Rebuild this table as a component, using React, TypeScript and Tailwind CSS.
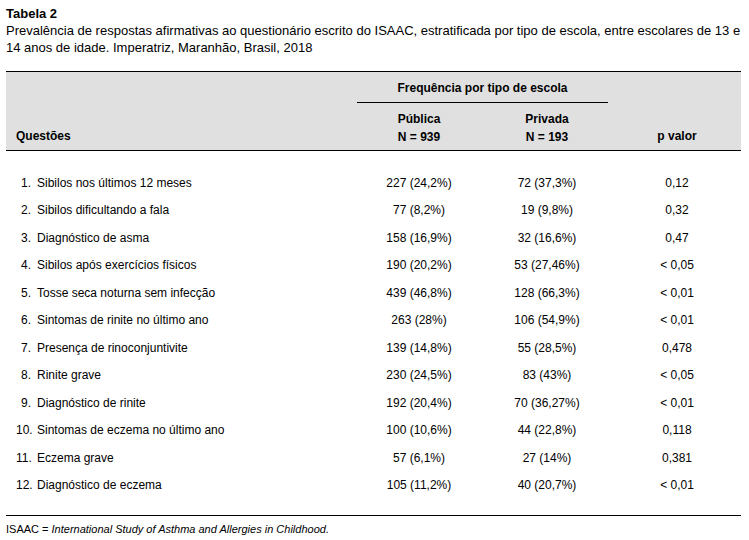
import React from "react";

const rows: [string, string, string, string][] = [
  ["Sibilos nos últimos 12 meses", "227 (24,2%)", "72 (37,3%)", "0,12"],
  ["Sibilos dificultando a fala", "77 (8,2%)", "19 (9,8%)", "0,32"],
  ["Diagnóstico de asma", "158 (16,9%)", "32 (16,6%)", "0,47"],
  ["Sibilos após exercícios físicos", "190 (20,2%)", "53 (27,46%)", "< 0,05"],
  ["Tosse seca noturna sem infecção", "439 (46,8%)", "128 (66,3%)", "< 0,01"],
  ["Sintomas de rinite no último ano", "263 (28%)", "106 (54,9%)", "< 0,01"],
  ["Presença de rinoconjuntivite", "139 (14,8%)", "55 (28,5%)", "0,478"],
  ["Rinite grave", "230 (24,5%)", "83 (43%)", "< 0,05"],
  ["Diagnóstico de rinite", "192 (20,4%)", "70 (36,27%)", "< 0,01"],
  ["Sintomas de eczema no último ano", "100 (10,6%)", "44 (22,8%)", "0,118"],
  ["Eczema grave", "57 (6,1%)", "27 (14%)", "0,381"],
  ["Diagnóstico de eczema", "105 (11,2%)", "40 (20,7%)", "< 0,01"],
];

export default function App() {
  return (
    <div
      className="w-[749px] h-[540px] bg-white text-black px-[6px] pt-[5px]"
      style={{ fontFamily: '"Liberation Sans", Arial, sans-serif' }}
    >
      <div className="text-[13px] leading-[17px] font-bold">Tabela 2</div>
      <div className="text-[13px] leading-[17px] whitespace-nowrap">
        Prevalência de respostas afirmativas ao questionário escrito do ISAAC, estratificada por tipo de escola, entre escolares de 13 e
        <br />
        14 anos de idade. Imperatriz, Maranhão, Brasil, 2018
      </div>
      <div className="mt-[15px] w-[735px]">
        <div className="border-t border-b border-black bg-[#e0e0e0] h-[80px] grid grid-cols-[351px_124px_132px_128px] text-[12px] font-bold">
          <div className="flex items-end pl-[10px] pb-[5px]">Questões</div>
          <div className="col-span-2 flex flex-col">
            <div className="mr-[5px] border-b border-black h-[31px] flex items-center justify-center pt-[1px]">
              Frequência por tipo de escola
            </div>
            <div className="grid grid-cols-[124px_132px] leading-[18px] pt-[7px]">
              <div className="text-center">Pública<br />N = 939</div>
              <div className="text-center">Privada<br />N = 193</div>
            </div>
          </div>
          <div className="flex items-end justify-center pb-[5px]">p valor</div>
        </div>
        <div className="border-b border-black pt-[18px] pb-[16px] text-[12px]">
          {rows.map((r, i) => (
            <div key={i} className="grid grid-cols-[351px_124px_132px_128px] h-[27.5px] items-center">
              <div className="flex pl-[10px]">
                <span className={i < 9 ? "w-[21px] text-right pr-[6px]" : "w-[21px]"}>{i + 1}.</span>
                <span>{r[0]}</span>
              </div>
              <div className="text-center">{r[1]}</div>
              <div className="text-center">{r[2]}</div>
              <div className="text-center">{r[3]}</div>
            </div>
          ))}
        </div>
        <div className="text-[11px] pt-[5px]">
          ISAAC = <i>International Study of Asthma and Allergies in Childhood.</i>
        </div>
      </div>
    </div>
  );
}
